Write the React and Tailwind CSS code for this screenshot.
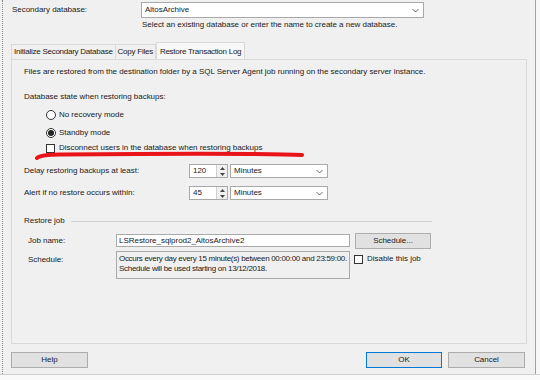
import React from 'react';

const Chevron = () => (
  <svg width="7" height="5" viewBox="0 0 7 5" className="shrink-0">
    <path d="M0.5 1 L3.5 4 L6.5 1" fill="none" stroke="#555" strokeWidth="0.9" />
  </svg>
);

function Combo({ value, className }) {
  return (
    <div className={`flex items-center justify-between bg-white border border-[#a9a9a9] pl-[3px] pr-[4px] ${className}`}>
      <span>{value}</span>
      <Chevron />
    </div>
  );
}

function Spin({ value }) {
  return (
    <div className="flex h-[14px] w-[39px] border border-[#a9a9a9] bg-white">
      <span className="flex-1 pl-[3px] leading-[12px]">{value}</span>
      <div className="flex w-[11px] flex-col border-l border-[#d0d0d0] bg-[#f0f0f0]">
        <div className="flex flex-1 items-center justify-center">
          <svg width="5" height="3" viewBox="0 0 5 3"><path d="M0 3 L2.5 0 L5 3Z" fill="#444" /></svg>
        </div>
        <div className="flex flex-1 items-center justify-center">
          <svg width="5" height="3" viewBox="0 0 5 3"><path d="M0 0 L2.5 3 L5 0Z" fill="#444" /></svg>
        </div>
      </div>
    </div>
  );
}

function Radio({ checked, label }) {
  return (
    <div className="flex h-[12px] items-center pl-[22px]">
      <span className="flex h-[10px] w-[10px] items-center justify-center rounded-full border border-[#333] bg-white">
        {checked && <span className="h-[6px] w-[6px] rounded-full bg-[#222]" />}
      </span>
      <span className="ml-[3px]">{label}</span>
    </div>
  );
}

function Check({ label }) {
  return (
    <div className="flex items-center">
      <span className="h-[9px] w-[9px] border border-[#333] bg-white" />
      <span className="ml-[4px]">{label}</span>
    </div>
  );
}

function Button({ children, primary, className }) {
  return (
    <div className={`flex h-[16px] items-center justify-center bg-[#e1e1e1] border ${primary ? 'border-[#0078d7]' : 'border-[#adadad]'} ${className}`}>
      {children}
    </div>
  );
}

export default function App() {
  return (
    <div
      className="relative flex h-[380px] w-[540px] flex-col overflow-hidden bg-[#f0f0f0] text-[8px] tracking-[-0.03px] text-[#1a1a1a]"
      style={{ fontFamily: '"Liberation Sans", Arial, sans-serif' }}
    >
      <div className="flex flex-1">
        <div className="w-[3px] border-r border-dotted border-[#888]" />
        <div className="flex flex-1 flex-col">
          {/* Secondary database */}
          <div className="mt-[2px] flex h-[16px] items-center">
            <span className="w-[138px] pl-[9px]">Secondary database:</span>
            <Combo value="AltosArchive" className="h-[16px] w-[283px]" />
          </div>
          <div className="ml-[139px] mt-[1px] h-[12px] leading-[12px]">
            Select an existing database or enter the name to create a new database.
          </div>

          {/* Tabs */}
          <div className="ml-[8px] mt-[11px] flex items-end tracking-[-0.25px]">
            <div className="flex h-[15px] items-center border border-b-0 border-[#d9d9d9] px-[2px]">Initialize Secondary Database</div>
            <div className="flex h-[15px] items-center border border-b-0 border-l-0 border-[#d9d9d9] px-[2px]">Copy Files</div>
            <div className="-mb-px flex h-[18px] items-center border border-b-0 border-[#d9d9d9] bg-[#f7f7f7] px-[3px]">Restore Transaction Log</div>
          </div>

          {/* Panel */}
          <div className="ml-[8px] mr-[8px] flex h-[285px] flex-col border border-[#d9d9d9] pl-[12px]">
            <div className="mt-[6px] h-[12px] leading-[12px]">
              Files are restored from the destination folder by a SQL Server Agent job running on the secondary server instance.
            </div>
            <div className="mt-[13px] h-[12px] leading-[12px]">Database state when restoring backups:</div>
            <div className="mt-[6px]"><Radio label="No recovery mode" /></div>
            <div className="mt-[6px]"><Radio checked label="Standby mode" /></div>
            <div className="mt-[3px] flex h-[12px] items-center pl-[22px]">
              <Check label="Disconnect users in the database when restoring backups" />
            </div>

            <div className="mt-[10px] flex h-[14px] items-center">
              <span className="w-[165px]">Delay restoring backups at least:</span>
              <Spin value="120" />
              <Combo value="Minutes" className="ml-[2px] h-[14px] w-[98px]" />
            </div>
            <div className="mt-[8px] flex h-[14px] items-center">
              <span className="w-[165px]">Alert if no restore occurs within:</span>
              <Spin value="45" />
              <Combo value="Minutes" className="ml-[2px] h-[14px] w-[98px]" />
            </div>

            <div className="mt-[15px] flex h-[12px] items-center pr-[94px]">
              <span>Restore job</span>
              <div className="ml-[6px] h-px flex-1 bg-[#d0d0d0]" />
            </div>

            <div className="mt-[6px] flex h-[15px] items-center pl-[4px]">
              <span className="w-[88px]">Job name:</span>
              <div className="flex h-[13px] w-[234px] items-center border border-[#a9a9a9] bg-white pl-[2px]">
                LSRestore_sqlprod2_AltosArchive2
              </div>
              <Button className="ml-[5px] w-[76px]">Schedule...</Button>
            </div>

            <div className="mt-[3px] flex pl-[4px]">
              <span className="w-[88px] pt-[3px]">Schedule:</span>
              <div className="h-[28px] w-[234px] overflow-hidden whitespace-nowrap border border-[#a9a9a9] bg-[#f0f0f0] pl-[2px] pt-[2px] leading-[10px] tracking-[-0.3px]">
                <div>Occurs every day every 15 minute(s) between 00:00:00 and 23:59:00.</div>
                <div>Schedule will be used starting on 13/12/2018.</div>
              </div>
              <div className="ml-[4px] mt-[3px] flex h-[10px] items-center">
                <Check label="Disable this job" />
              </div>
            </div>
          </div>

          {/* Buttons */}
          <div className="ml-[8px] mt-[8px] flex">
            <Button className="w-[77px]">Help</Button>
            <div className="flex-1" />
            <Button primary className="w-[76px]">OK</Button>
            <Button className="ml-[6px] mr-[10px] w-[77px]">Cancel</Button>
          </div>
        </div>
        <div className="w-[5px] border-l border-[#a0a0a0] bg-[#f7f7f7]" />
      </div>
      <div className="h-[6px] border-t border-[#d0d0d0] bg-[#fafafa]" />

      {/* red marker annotation */}
      <svg className="pointer-events-none absolute left-0 top-0" width="540" height="380">
        <path
          d="M37 158 C40 155.5, 46 154.5, 60 154.5 C120 154, 200 153.5, 250 154 C275 154.3, 292 154.6, 302 155"
          fill="none"
          stroke="#e8141a"
          strokeWidth="4"
          strokeLinecap="round"
        />
      </svg>
    </div>
  );
}
